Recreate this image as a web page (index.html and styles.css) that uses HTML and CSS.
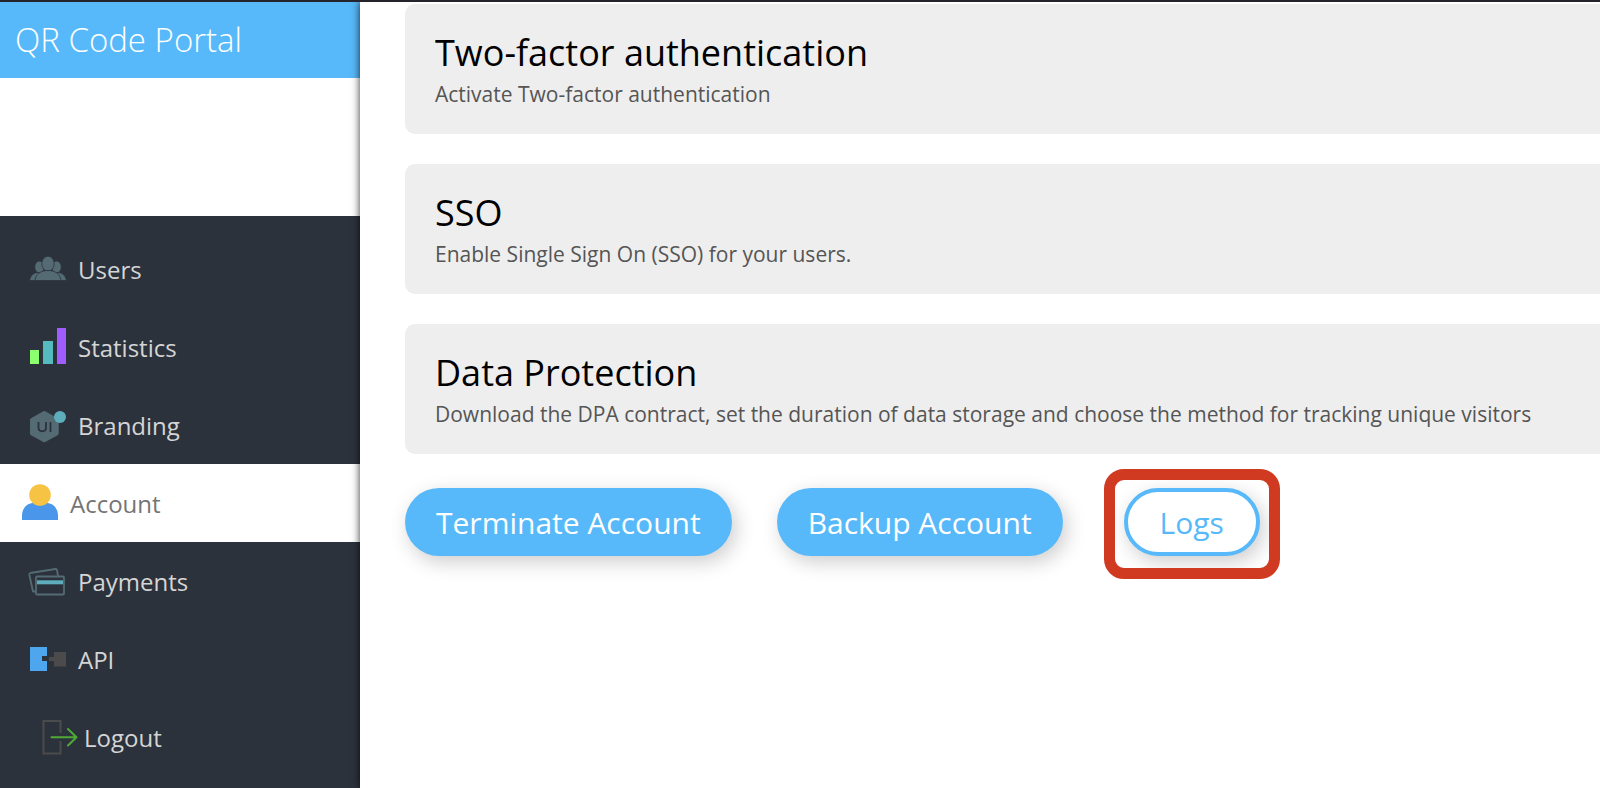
FILE: index.html
```html
<!DOCTYPE html>
<html lang="en">
<head>
  <meta charset="UTF-8">
  <meta name="viewport" content="width=device-width, initial-scale=1.0">
  <title>QR Code Portal</title>
  <link rel="stylesheet" href="styles.css">
</head>
<body>

<div class="layout">
  <aside class="sidebar">
    <a class="brand" href="#">QR Code Portal</a>
    <div class="logo-space"></div>
    <nav class="menu">
      <a href="#">
        <svg class="icon" viewBox="0 0 36 36" fill="#546b74" stroke="#2c323c" stroke-width="0.800" aria-hidden="true">
          <ellipse cx="9.500" cy="17" rx="4.800" ry="6"/>
          <ellipse cx="26.500" cy="17" rx="4.800" ry="6"/>
          <path d="M-.5 30.500c1-5 4-8 9-8h19c5 0 8 3 9 8z"/>
          <ellipse cx="18" cy="13.700" rx="6.200" ry="7.500"/>
          <path d="M5 30.500c1-7 6-10 13-10s12 3 13 10z"/>
        </svg>
        <span>Users</span>
      </a>
      <a href="#">
        <svg class="icon" viewBox="0 0 36 36" aria-hidden="true">
          <path d="M0 22h9v14H0z" fill="#8cff6e"/>
          <path d="M13 13h10v23H13z" fill="#55babd"/>
          <path d="M27 0h9v36h-9z" fill="#9f5cff"/>
        </svg>
        <span>Statistics</span>
      </a>
      <a href="#">
        <svg class="icon" viewBox="0 0 36 36" aria-hidden="true">
          <path d="M14.300 7L26.700 14v13.500L14.300 34.200 2 27.500V14z" fill="#546b74" stroke="#546b74" stroke-width="4" stroke-linejoin="round"/>
          <path d="M8.500 16v5.500c0 5 7.500 5 7.500 0V16M20.500 16v10" fill="none" stroke="#2c323c" stroke-width="1.800"/>
          <circle cx="30" cy="11" r="6" fill="#5eadbc"/>
        </svg>
        <span>Branding</span>
      </a>
      <a class="active" href="#">
        <svg class="icon" viewBox="0 0 36 36" aria-hidden="true">
          <path d="M0 36v-4c0-8 5-13 12-13h12c7 0 12 5 12 13v4z" fill="#4a96ea"/>
          <circle cx="18" cy="11" r="10.800" fill="#f6c344"/>
        </svg>
        <span>Account</span>
      </a>
      <a href="#">
        <svg class="icon" viewBox="0 0 36 36" fill="none" stroke="#546b74" stroke-width="1.800" stroke-linejoin="round" aria-hidden="true">
          <path d="M5.500 29.500H3L-.7 12.500Q-.9 11.300 .3 11L25.500 7q1.200-.2 1.500 1l1 6"/>
          <rect x="6" y="14.500" width="28" height="18" rx="1"/>
          <path d="M7 20.300h26" stroke="#5eadbc" stroke-width="4"/>
        </svg>
        <span>Payments</span>
      </a>
      <a href="#">
        <svg class="icon" viewBox="0 0 36 36" aria-hidden="true">
          <path d="M0 7h17v9h-5v5h5v10H0z" fill="#4da6ee"/>
          <path d="M24 12h12v14.500H24V21h-5v-4h5z" fill="#4b4b4b"/>
        </svg>
        <span>API</span>
      </a>
      <a class="logout" href="#">
        <svg class="icon" viewBox="0 0 36 36" fill="none" stroke-width="2" aria-hidden="true">
          <path d="M18.500 15V3H1.500v32.500h17V23" stroke="#4b4b4b"/>
          <path d="M9.500 19.200h24.500M26 11l8.500 8.200L26 27.500" stroke="#4faa35" stroke-linecap="round" stroke-linejoin="round"/>
        </svg>
        <span>Logout</span>
      </a>
    </nav>
  </aside>

  <main class="content">
    <section class="card">
      <h2>Two-factor authentication</h2>
      <p>Activate Two-factor authentication</p>
    </section>
    <section class="card">
      <h2>SSO</h2>
      <p>Enable Single Sign On (SSO) for your users.</p>
    </section>
    <section class="card">
      <h2>Data Protection</h2>
      <p>Download the DPA contract, set the duration of data storage and choose the method for tracking unique visitors</p>
    </section>
    <div class="actions">
      <button type="button" class="btn">Terminate Account</button>
      <button type="button" class="btn">Backup Account</button>
      <div class="highlight">
        <button type="button" class="btn btn-outline">Logs</button>
      </div>
    </div>
  </main>
</div>

</body>
</html>
```
FILE: styles.css
```css
* {
  margin: 0;
  padding: 0;
  box-sizing: border-box;
}
body {
  background: #fff;
  font-family: "Open Sans", sans-serif;
  border-top: 2px solid #25232b;
}
.layout {
  display: flex;
  min-height: calc(100vh - 2px);
}

/* sidebar */
.sidebar {
  flex: 0 0 360px;
  display: flex;
  flex-direction: column;
}
.brand {
  background: #57b9f9;
  color: #fff;
  font-size: 33px;
  font-weight: 300;
  line-height: 76px;
  padding-left: 15px;
  text-decoration: none;
}
.logo-space {
  height: 138px;
}
.menu {
  flex: 1;
  background: #2c323c;
  padding-top: 14px;
}
.menu a {
  display: flex;
  align-items: center;
  gap: 12px;
  height: 78px;
  padding-left: 30px;
  color: #d5d5d5;
  font-size: 24px;
  text-decoration: none;
}
.menu a.active {
  background: #fff;
  color: #757575;
  padding-left: 22px;
}
.menu a.logout {
  padding-left: 42px;
  gap: 6px;
}
.icon {
  width: 36px;
  height: 36px;
  margin-bottom: 2px;
  overflow: visible;
}

/* content */
.content {
  position: relative;
  flex: 1;
  min-width: 0;
  background: #fff;
  padding: 2px 0 30px 45px;
  box-shadow: 0 0 8px rgba(0, 0, 0, 0.8);
}
.card {
  background: #eee;
  border-radius: 10px 0 0 10px;
  padding: 24px 30px;
  margin-bottom: 30px;
}
.card h2 {
  color: #000;
  font-size: 36px;
  font-weight: 400;
  line-height: 50px;
}
.card p {
  color: #555;
  font-size: 21px;
  line-height: 32px;
}
.actions {
  display: flex;
  align-items: center;
  gap: 45px;
  padding-top: 4px;
}
.btn {
  height: 68px;
  padding: 0 31px;
  border: none;
  border-radius: 34px;
  background: #57b9f9;
  color: #fff;
  font-family: inherit;
  font-size: 30px;
  box-shadow: 4px 6px 20px rgba(0, 0, 0, 0.2);
  cursor: pointer;
}
.btn-outline {
  padding: 0 32px;
  background: #fff;
  color: #57b9f9;
  border: 4px solid #57b9f9;
}
.highlight {
  position: relative;
  margin-left: 16px;
}
.highlight::after {
  content: "";
  position: absolute;
  inset: -19px -20px -23px -20px;
  border: 11px solid #cf3a20;
  border-radius: 20px;
  pointer-events: none;
}
```
